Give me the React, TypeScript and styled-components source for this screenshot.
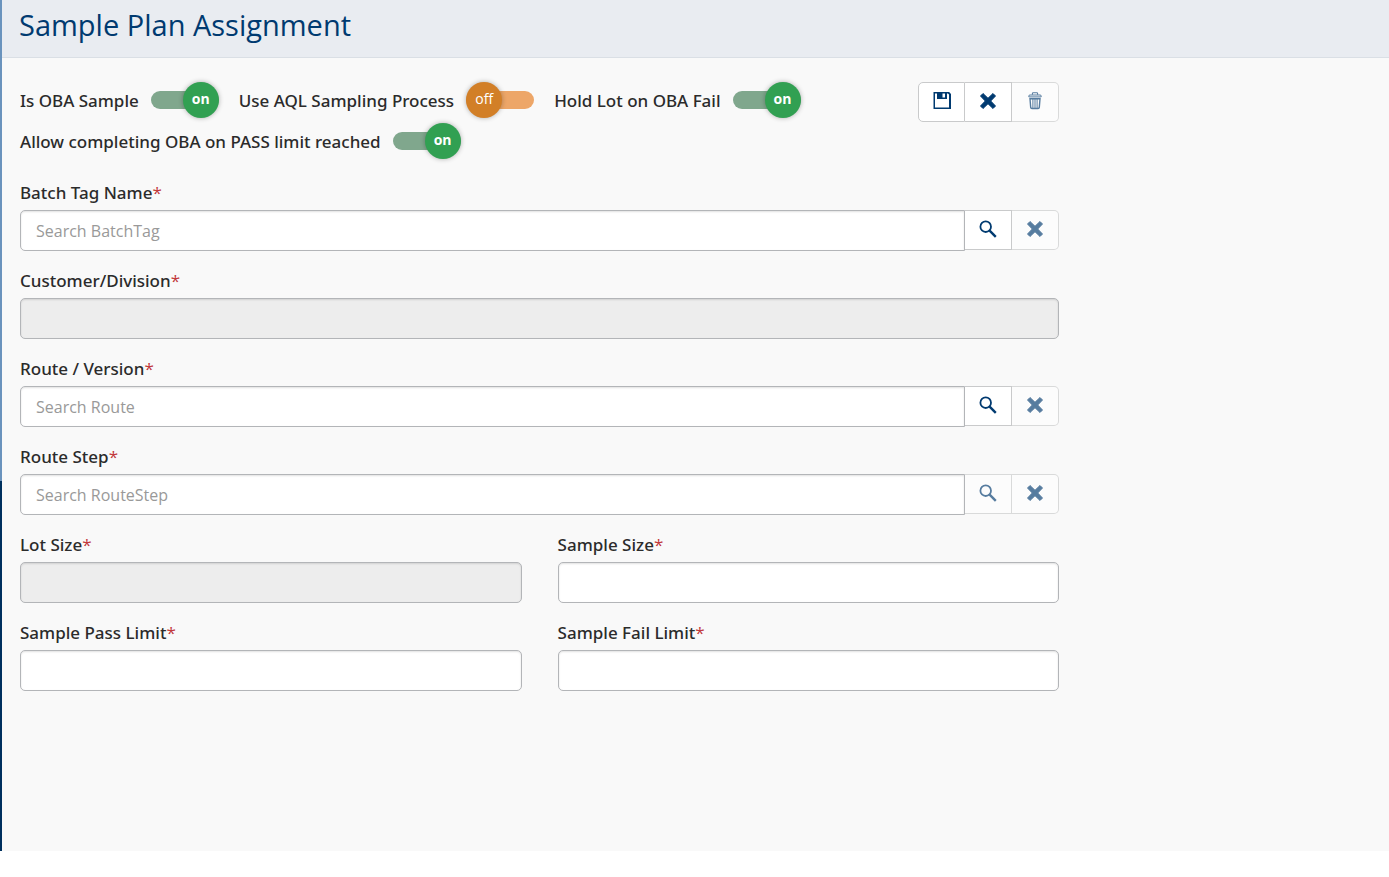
import React, { useState } from 'react';
import styled, { createGlobalStyle } from 'styled-components';

const navy = '#003a70';
const labelFont = '500 17px/24px "Noto Sans", "Open Sans", sans-serif';

const GlobalStyle = createGlobalStyle`
  *, *::before, *::after { box-sizing: border-box; }
  body {
    margin: 0;
    background: #fff;
    color: #2b2b2b;
    font: 400 16px/24px "Open Sans", "Noto Sans", sans-serif;
  }
`;

const Page = styled.div`
  display: grid;
  grid-template-columns: 2px 1fr;
  min-height: calc(100vh - 26px);
  background: #f9f9f9;
`;

const Rail = styled.div`
  background: linear-gradient(#6a93bd 0 481px, #00305e 481px);
`;

const Header = styled.header`
  height: 58px;
  padding: 5px 17px;
  background: #e9ecf1;
  border-bottom: 1px solid #dadfe5;
`;

const Title = styled.h1`
  margin: 0;
  color: ${navy};
  font-size: 29px;
  font-weight: 400;
  line-height: 40px;
`;

const Content = styled.main`
  display: grid;
  grid-template-columns: 10fr 3fr;
  padding: 24px 18px;
`;

const Form = styled.form`
  display: flex;
  flex-direction: column;
  gap: 18px;
`;

const TopBar = styled.div`
  display: flex;
  justify-content: space-between;
  align-items: flex-start;
  gap: 20px;
  margin-bottom: 4px;
`;

const Switches = styled.div`
  display: flex;
  flex-wrap: wrap;
  gap: 5px 20px;
  flex: 1;
  max-width: 800px;
`;

const SwitchLabel = styled.label`
  display: flex;
  align-items: center;
  gap: 12px;
  height: 36px;
  font: ${labelFont};
`;

const SwitchText = styled.span`
  padding-top: 2px;
`;

const SwitchBody = styled.span`
  position: relative;
  display: flex;
  align-items: center;
  width: 68px;
  height: 36px;
  font-family: "Open Sans", sans-serif;
`;

const SwitchInput = styled.input`
  appearance: none;
  width: 100%;
  height: 18px;
  margin: 0;
  border-radius: 9px;
  background: #eda668;
  cursor: pointer;
  &:checked { background: #80a78d; }
`;

const Knob = styled.span<{ $on: boolean }>`
  position: absolute;
  top: 0;
  ${p => (p.$on ? 'right: 0;' : 'left: 0;')}
  width: 36px;
  height: 36px;
  border-radius: 50%;
  background: ${p => (p.$on ? '#31a052' : '#d27f27')};
  box-shadow: 0 0 5px rgba(0, 0, 0, 0.3);
  color: #fff;
  font-size: 14px;
  font-weight: ${p => (p.$on ? 700 : 400)};
  line-height: 34px;
  text-align: center;
  pointer-events: none;
`;

const ButtonGroup = styled.div`
  display: flex;
`;

const IconButton = styled.button`
  display: flex;
  align-items: center;
  justify-content: center;
  width: 47px;
  height: 40px;
  padding: 0 0 2px;
  border: 1px solid #c9cacb;
  border-left-width: 0;
  background: #fff;
  color: ${navy};
  &:last-child { border-radius: 0 5px 5px 0; }
  &:disabled { opacity: 0.65; }
`;

const Toolbar = styled(ButtonGroup)`
  ${IconButton}:first-child {
    border-left-width: 1px;
    border-radius: 5px 0 0 5px;
  }
`;

const Columns = styled.div`
  display: grid;
  grid-template-columns: 1fr 1fr;
  gap: 18px 36px;
`;

const FieldBox = styled.div`
  display: flex;
  flex-direction: column;
  gap: 5px;
`;

const FieldLabel = styled.label`
  font: ${labelFont};
`;

const Required = styled.span`
  color: #c1373a;
  font-family: "Open Sans", sans-serif;
`;

const InputRow = styled.div`
  display: flex;
  align-items: flex-start;
`;

const TextInput = styled.input<{ $joined?: boolean }>`
  flex: 1;
  min-width: 0;
  height: 41px;
  padding: 0 15px;
  border: 1px solid #b3b5b8;
  border-radius: ${p => (p.$joined ? '5px 0 0 5px' : '5px')};
  background: #fff;
  box-shadow: inset 0 1px 2px rgba(0, 0, 0, 0.12);
  color: inherit;
  font: inherit;
  &::placeholder { color: #999; opacity: 1; }
  &:disabled { background: #ededed; }
`;

const SaveIcon = () => (
  <svg width="18" height="18" viewBox="0 0 18 18" aria-hidden="true">
    <path fill="currentColor" fillRule="evenodd" d="M.5 0h15.6l1.9 1.9V17H.5zM2 1.5v14h14V2.6l-1.1-1.1h-.9V7H4V1.5zM9.5 1.5v4h2.5v-4z" />
  </svg>
);

const CrossIcon = () => (
  <svg width="18" height="18" viewBox="0 0 18 18" aria-hidden="true">
    <path
      d="M4 1.5L9 6.3L14 1.5L16.5 4L11.7 9L16.5 14L14 16.5L9 11.7L4 16.5L1.5 14L6.3 9L1.5 4z"
      fill="currentColor" stroke="currentColor" strokeWidth="1" strokeLinejoin="round"
    />
  </svg>
);

const TrashIcon = () => (
  <svg width="18" height="18" viewBox="0 0 18 18" aria-hidden="true">
    <g fill="none" stroke="currentColor">
      <path d="M6.4 2.8V1.6q0-.8.8-.8h3.6q.8 0 .8.8v1.2" strokeWidth="1.1" />
      <path d="M2.8 4.9v-.8q0-1.1 1.1-1.1h10.2q1.1 0 1.1 1.1v.8z" strokeWidth="1" />
      <path d="M4 6.8l.7 8.6q.1 1.1 1.2 1.1h6.2q1.1 0 1.2-1.1l.7-8.6z" strokeWidth="1.4" />
      <path d="M6.9 7v9M9 7v9M11.1 7v9" strokeWidth="1" />
    </g>
  </svg>
);

const SearchIcon = () => (
  <svg width="18" height="18" viewBox="0 0 18 18" aria-hidden="true">
    <g fill="none" stroke="currentColor">
      <circle cx="6.7" cy="6.7" r="5.3" strokeWidth="1.8" />
      <path d="M10.6 10.6l6.2 6.2" strokeWidth="2.4" />
    </g>
  </svg>
);

function Switch({ text, initial }: { text: string; initial: boolean }) {
  const [on, setOn] = useState(initial);
  return (
    <SwitchLabel>
      <SwitchText>{text}</SwitchText>
      <SwitchBody>
        <SwitchInput type="checkbox" checked={on} onChange={e => setOn(e.target.checked)} />
        <Knob $on={on} aria-hidden="true">{on ? 'on' : 'off'}</Knob>
      </SwitchBody>
    </SwitchLabel>
  );
}

interface FieldProps {
  id: string;
  label: string;
  disabled?: boolean;
  placeholder?: string;
  search?: 'enabled' | 'disabled';
}

function Field({ id, label, disabled, placeholder, search }: FieldProps) {
  return (
    <FieldBox>
      <FieldLabel htmlFor={id}>{label}<Required>*</Required></FieldLabel>
      <InputRow>
        <TextInput id={id} type="text" disabled={disabled} placeholder={placeholder} $joined={!!search} />
        {search && (
          <ButtonGroup>
            <IconButton type="button" aria-label={`Search ${label}`} disabled={search === 'disabled'}><SearchIcon /></IconButton>
            <IconButton type="button" aria-label={`Clear ${label}`} disabled><CrossIcon /></IconButton>
          </ButtonGroup>
        )}
      </InputRow>
    </FieldBox>
  );
}

export default function App() {
  return (
    <>
      <GlobalStyle />
      <Page>
        <Rail />
        <div>
          <Header><Title>Sample Plan Assignment</Title></Header>
          <Content>
            <Form onSubmit={e => e.preventDefault()}>
              <TopBar>
                <Switches>
                  <Switch text="Is OBA Sample" initial />
                  <Switch text="Use AQL Sampling Process" initial={false} />
                  <Switch text="Hold Lot on OBA Fail" initial />
                  <Switch text="Allow completing OBA on PASS limit reached" initial />
                </Switches>
                <Toolbar>
                  <IconButton type="submit" aria-label="Save"><SaveIcon /></IconButton>
                  <IconButton type="button" aria-label="Cancel"><CrossIcon /></IconButton>
                  <IconButton type="button" aria-label="Delete" disabled><TrashIcon /></IconButton>
                </Toolbar>
              </TopBar>
              <Field id="batch-tag" label="Batch Tag Name" placeholder="Search BatchTag" search="enabled" />
              <Field id="customer" label="Customer/Division" disabled />
              <Field id="route" label="Route / Version" placeholder="Search Route" search="enabled" />
              <Field id="route-step" label="Route Step" placeholder="Search RouteStep" search="disabled" />
              <Columns>
                <Field id="lot-size" label="Lot Size" disabled />
                <Field id="sample-size" label="Sample Size" />
                <Field id="pass-limit" label="Sample Pass Limit" />
                <Field id="fail-limit" label="Sample Fail Limit" />
              </Columns>
            </Form>
          </Content>
        </div>
      </Page>
    </>
  );
}
